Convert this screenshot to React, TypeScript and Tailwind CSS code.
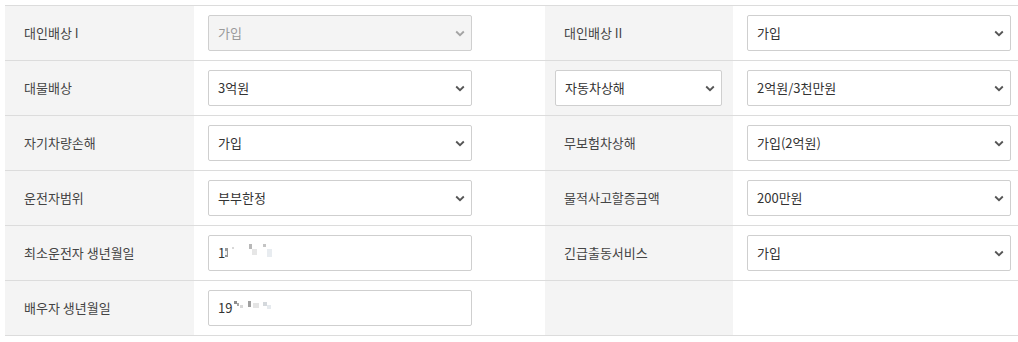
import React from "react";

const Chevron = () => (
  <svg width="10" height="7" viewBox="0 0 10 7" className="shrink-0">
    <path d="M1.2 1.5 L5 5.2 L8.8 1.5" fill="none" stroke="#555" strokeWidth="1.8" />
  </svg>
);

const Select = ({ value, disabled, className = "" }: { value: string; disabled?: boolean; className?: string }) => (
  <div
    className={`h-[36px] flex items-center justify-between pl-[9px] pr-[6px] border border-[#cfcfcf] rounded-[2px] ${
      disabled ? "bg-[#f4f4f4] text-[#9a9a9a]" : "bg-white text-[#333]"
    } ${className}`}
  >
    <span>{value}</span>
    <span className={disabled ? "opacity-50" : ""}>
      <Chevron />
    </span>
  </div>
);

type B = { x: number; y: number; w: number; h: number; c: string };

const Input = ({ text, blocks }: { text: string; blocks: B[] }) => (
  <div className="relative h-[36px] w-[264px] flex items-center pl-[9px] border border-[#cfcfcf] rounded-[2px] bg-white text-[#333]">
    <span>{text}</span>
    {blocks.map((b, i) => (
      <span
        key={i}
        className="absolute"
        style={{ left: b.x, top: b.y, width: b.w, height: b.h, background: b.c }}
      />
    ))}
  </div>
);

const Label = ({ children }: { children?: React.ReactNode }) => (
  <div className="bg-[#f4f4f4] flex items-center pl-[19px] text-[#444]">{children}</div>
);

const Val = ({ children }: { children?: React.ReactNode }) => (
  <div className="flex items-center pl-[14px]">{children}</div>
);

const rowCls = "grid grid-cols-[189px_351px_188px_285px] h-[55px] border-t border-[#dcdcdc]";

export default function App() {
  return (
    <div
      className="w-[1018px] h-[342px] bg-white pl-[5px] pt-[5px] text-[13px]"
      style={{ fontFamily: '"Noto Sans CJK KR", "Noto Sans", sans-serif' }}
    >
      <div className={rowCls}>
        <Label>대인배상 I</Label>
        <Val><Select value="가입" disabled className="w-[264px]" /></Val>
        <Label>대인배상 II</Label>
        <Val><Select value="가입" className="w-[264px]" /></Val>
      </div>
      <div className={rowCls}>
        <Label>대물배상</Label>
        <Val><Select value="3억원" className="w-[264px]" /></Val>
        <div className="bg-[#f4f4f4] flex items-center pl-[10px]">
          <Select value="자동차상해" className="w-[167px]" />
        </div>
        <Val><Select value="2억원/3천만원" className="w-[264px]" /></Val>
      </div>
      <div className={rowCls}>
        <Label>자기차량손해</Label>
        <Val><Select value="가입" className="w-[264px]" /></Val>
        <Label>무보험차상해</Label>
        <Val><Select value="가입(2억원)" className="w-[264px]" /></Val>
      </div>
      <div className={rowCls}>
        <Label>운전자범위</Label>
        <Val><Select value="부부한정" className="w-[264px]" /></Val>
        <Label>물적사고할증금액</Label>
        <Val><Select value="200만원" className="w-[264px]" /></Val>
      </div>
      <div className={rowCls}>
        <Label>최소운전자 생년월일</Label>
        <Val>
          <Input
            text="1"
            blocks={[
              { x: 16, y: 12, w: 3, h: 9, c: "#9a9a9a" },
              { x: 16, y: 15, w: 2, h: 4, c: "#f0f0f0" },
              { x: 23, y: 11, w: 2, h: 2, c: "#d8d8d8" },
              { x: 40, y: 8, w: 3, h: 5, c: "#b8b8b8" },
              { x: 43, y: 13, w: 5, h: 6, c: "#e6e6e6" },
              { x: 54, y: 8, w: 3, h: 3, c: "#c4c4c4" },
              { x: 58, y: 13, w: 5, h: 8, c: "#e8ecf0" },
            ]}
          />
        </Val>
        <Label>긴급출동서비스</Label>
        <Val><Select value="가입" className="w-[264px]" /></Val>
      </div>
      <div className={`${rowCls} h-[56px] border-b`}>
        <Label>배우자 생년월일</Label>
        <Val>
          <Input
            text="19"
            blocks={[
              { x: 25, y: 10, w: 3, h: 3, c: "#8c8c8c" },
              { x: 28, y: 12, w: 2, h: 3, c: "#a8a8a8" },
              { x: 31, y: 14, w: 3, h: 3, c: "#d8d8d8" },
              { x: 39, y: 10, w: 3, h: 6, c: "#a0a0a0" },
              { x: 44, y: 12, w: 6, h: 5, c: "#e4e4e4" },
              { x: 54, y: 11, w: 4, h: 4, c: "#d4d8dc" },
              { x: 58, y: 14, w: 4, h: 4, c: "#e6eaee" },
            ]}
          />
        </Val>
        <Label />
        <div />
      </div>
    </div>
  );
}
